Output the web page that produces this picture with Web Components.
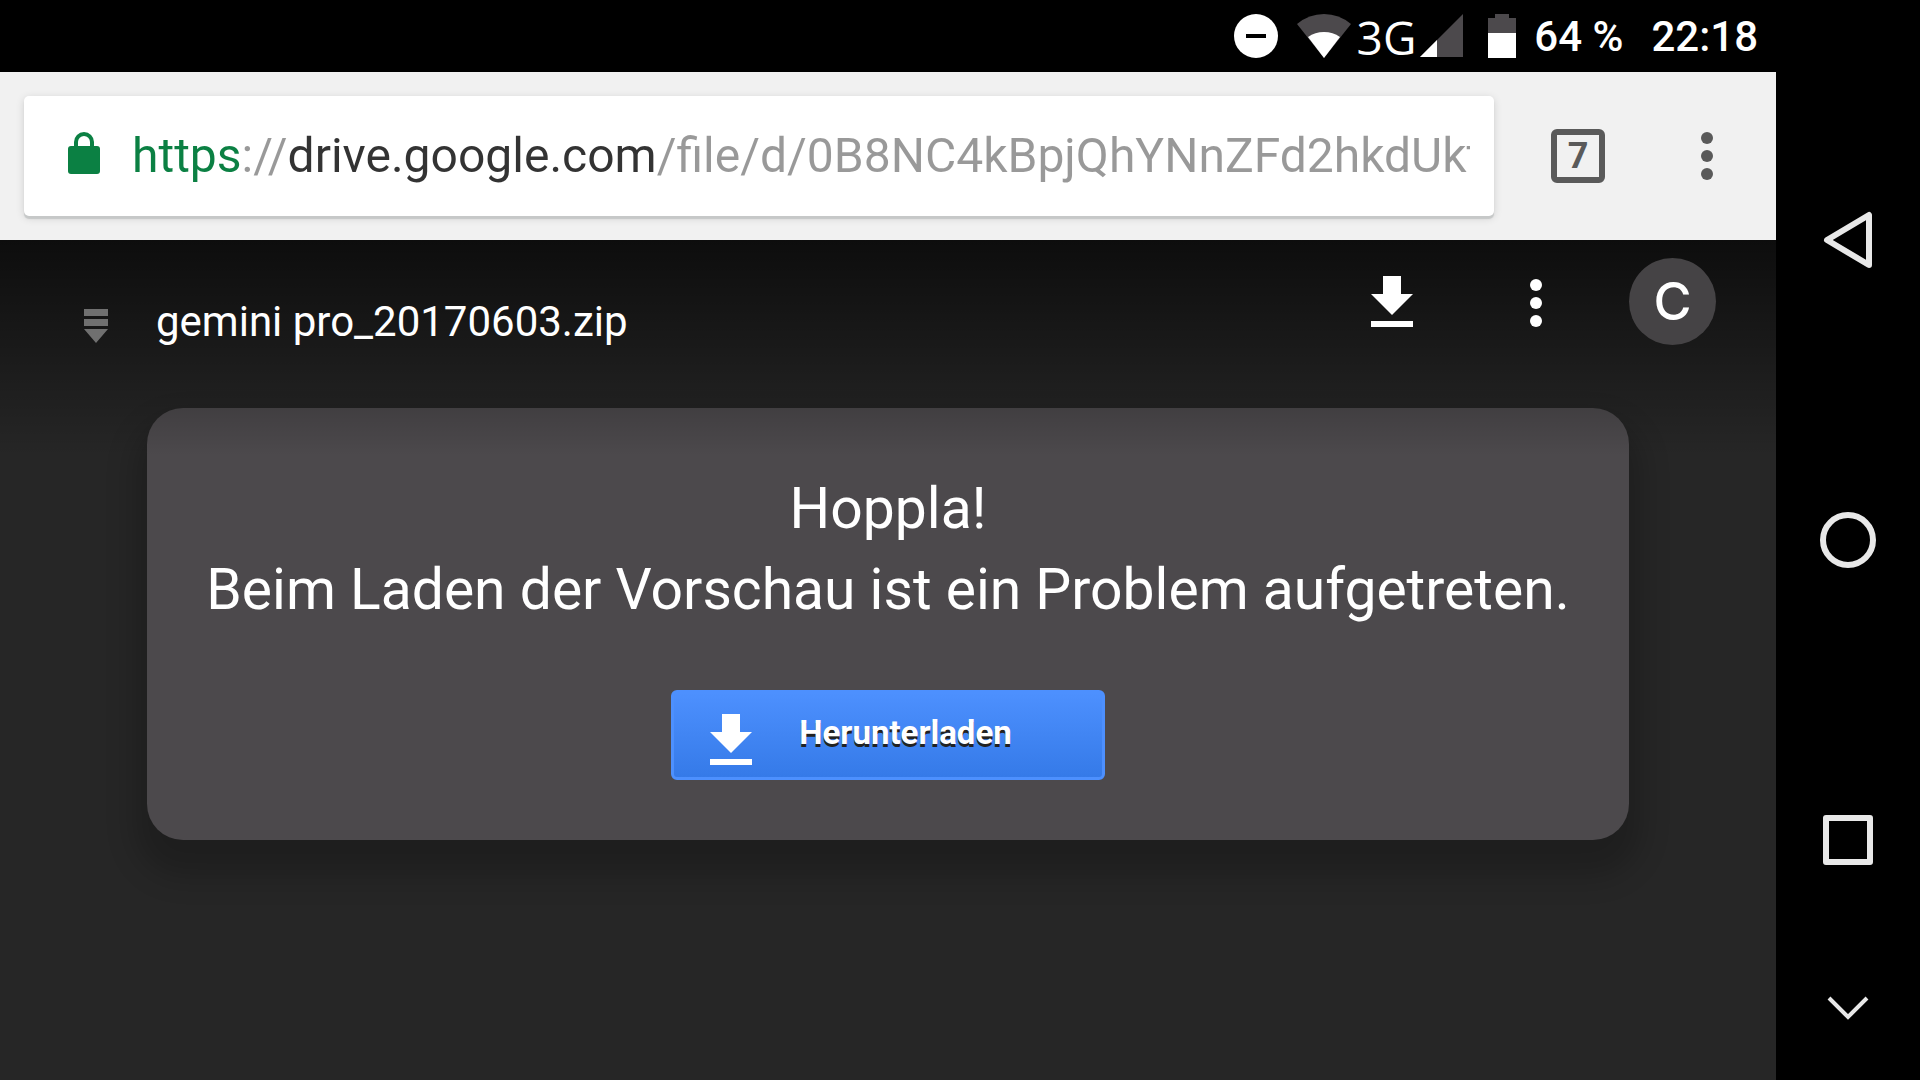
<!DOCTYPE html>
<html lang="de">
<head>
<meta charset="utf-8">
<title>gemini pro_20170603.zip</title>
<style>
  html, body {
    height: 100%;
    margin: 0;
  }
  body {
    background: #000;
    color: #fff;
    font-family: Roboto, "Open Sans", sans-serif;
  }
</style>
</head>
<body>
<phone-screen>
  <status-bar slot="status" network="3G" battery="64 %" time="22:18"></status-bar>
  <browser-toolbar slot="toolbar" tabs="7"
    url="https://drive.google.com/file/d/0B8NC4kBpjQhYNnZFd2hkdUktTUk"></browser-toolbar>
  <drive-viewer filename="gemini pro_20170603.zip" account="C">
    <preview-error>
      Hoppla!<br>Beim Laden der Vorschau ist ein Problem aufgetreten.
      <download-button slot="action">Herunterladen</download-button>
    </preview-error>
  </drive-viewer>
  <navigation-bar slot="navigation"></navigation-bar>
</phone-screen>

<script>
const downloadIcon = `
  <svg width="72" height="72" viewBox="0 0 24 24" fill="#fff" aria-hidden="true">
    <path d="M19 9h-4V3H9v6H5l7 7 7-7zM5 18v2h14v-2H5z"/>
  </svg>`;

const moreIcon = `
  <svg width="72" height="72" viewBox="0 0 24 24" fill="currentColor" aria-hidden="true">
    <circle cx="12" cy="6" r="2"/><circle cx="12" cy="12" r="2"/><circle cx="12" cy="18" r="2"/>
  </svg>`;

const buttonReset = `
  button {
    display: flex;
    align-items: center;
    justify-content: center;
    margin: 0;
    padding: 0;
    border: 0;
    background: none;
    color: inherit;
    font: inherit;
    cursor: pointer;
  }
  svg {
    display: block;
    flex: none;
  }`;

class PhoneScreen extends HTMLElement {

  constructor() {
    super();
    this.attachShadow({mode: 'open'});
  }

  connectedCallback() {
    this.shadowRoot.innerHTML = `
      <style>
        :host {
          display: grid;
          grid-template-columns: 1fr 144px;
          height: 100vh;
        }
        .window {
          display: flex;
          flex-direction: column;
          min-width: 0;
        }
      </style>
      <div class="window">
        <slot name="status"></slot>
        <slot name="toolbar"></slot>
        <slot></slot>
      </div>
      <slot name="navigation"></slot>
    `;
  }
}

class StatusBar extends HTMLElement {

  constructor() {
    super();
    this.attachShadow({mode: 'open'});
  }

  connectedCallback() {
    this.shadowRoot.innerHTML = `
      <style>
        :host {
          display: flex;
          align-items: center;
          justify-content: flex-end;
          height: 72px;
          padding-right: 18px;
          font-size: 42px;
          font-weight: 500;
          line-height: 72px;
        }
        svg {
          flex: none;
        }
        span {
          padding-top: 2px;
        }
        .wifi {
          margin-left: 19px;
        }
        .network {
          margin-left: 6px;
          font: 46px/72px "Open Sans", sans-serif;
        }
        .signal {
          margin-left: 4px;
        }
        .battery {
          margin: 0 18px 0 24px;
        }
        .time {
          margin-left: 28px;
        }
      </style>
      <svg width="44" height="44" viewBox="0 0 44 44" role="img" aria-label="Nicht stören">
        <circle cx="22" cy="22" r="22" fill="#fff"/>
        <path d="M12 20h20v4H12z"/>
      </svg>
      <svg class="wifi" width="54" height="44" viewBox="0 0 54 44" role="img" aria-label="WLAN">
        <path d="M27 44 0 10Q12 0 27 0T54 10z" fill="#4c494c"/>
        <path d="M27 44 11 23Q18 18 27 18T43 23z" fill="#fff"/>
      </svg>
      <span class="network">${this.getAttribute('network')}</span>
      <svg class="signal" width="44" height="44" viewBox="0 0 44 44" role="img" aria-label="Mobilfunk">
        <path d="M0 43 43 0v43z" fill="#4c494c"/>
        <path d="M0 43 17 26v17z" fill="#fff"/>
      </svg>
      <svg class="battery" width="28" height="44" viewBox="0 0 28 44" role="img" aria-label="Akku">
        <path d="M0 4h7V0h14v4h7v15H0z" fill="#4c494c"/>
        <path d="M0 19h28v25H0z" fill="#fff"/>
      </svg>
      <span>${this.getAttribute('battery')}</span>
      <span class="time">${this.getAttribute('time')}</span>
    `;
  }
}

class BrowserToolbar extends HTMLElement {

  constructor() {
    super();
    this.attachShadow({mode: 'open'});
  }

  connectedCallback() {
    this.shadowRoot.innerHTML = `
      <style>
        ${buttonReset}
        :host {
          display: flex;
          align-items: center;
          height: 168px;
          padding: 0 12px 0 24px;
          box-sizing: border-box;
          background: #f1f1f1;
          color: #5a5a5a;
        }
        .omnibox {
          display: flex;
          align-items: center;
          flex: 1;
          min-width: 0;
          height: 120px;
          margin-right: 12px;
          padding: 0 24px 0 44px;
          box-sizing: border-box;
          border-radius: 5px;
          background: #fff;
          box-shadow: 0 3px 1px #c6c8c8, 0 2px 8px rgba(0, 0, 0, .14);
        }
        /* scheme, separator, host and path each get their own colour stop */
        input {
          flex: 1;
          min-width: 0;
          height: 72px;
          margin-left: 32px;
          padding: 0;
          border: 0;
          outline: 0;
          background: linear-gradient(90deg, #0b8043 110px, #999 110px 156px, #333 156px 523px, #999 523px);
          -webkit-background-clip: text;
          background-clip: text;
          color: transparent;
          font: 48px/72px Roboto, "Open Sans", sans-serif;
        }
        .tabs {
          width: 144px;
          height: 144px;
        }
        .tabs span {
          width: 42px;
          border: 6px solid #5a5a5a;
          border-radius: 6px;
          font-size: 36px;
          font-weight: 700;
          line-height: 42px;
          text-align: center;
        }
        .menu {
          width: 114px;
          height: 144px;
        }
      </style>
      <label class="omnibox">
        <svg width="32" height="48" viewBox="0 0 32 48" role="img" aria-label="Sichere Verbindung">
          <rect y="14" width="32" height="28" rx="3" fill="#0b8043"/>
          <path d="M8 15v-5a8 8 0 0 1 16 0v5" fill="none" stroke="#0b8043" stroke-width="4"/>
        </svg>
        <input type="text" aria-label="Adresse" spellcheck="false" value="${this.getAttribute('url')}">
      </label>
      <button class="tabs" type="button" aria-label="Tabs"><span>${this.getAttribute('tabs')}</span></button>
      <button class="menu" type="button" aria-label="Menü">${moreIcon}</button>
    `;
  }
}

class DriveViewer extends HTMLElement {

  constructor() {
    super();
    this.attachShadow({mode: 'open'});
  }

  connectedCallback() {
    this.shadowRoot.innerHTML = `
      <style>
        ${buttonReset}
        :host {
          display: block;
          flex: 1;
          position: relative;
          background: #262626;
        }
        /* fades the top of the page, card included */
        :host::before {
          content: "";
          position: absolute;
          inset: 0 0 auto;
          height: 216px;
          background: linear-gradient(rgba(0, 0, 0, .66), rgba(0, 0, 0, 0));
          pointer-events: none;
          z-index: 1;
        }
        header {
          display: flex;
          align-items: flex-start;
          position: relative;
          z-index: 2;
          height: 123px;
          padding: 0 60px 0 84px;
        }
        h1 {
          flex: 1;
          margin: 58px 0 0 48px;
          font-size: 42px;
          font-weight: 400;
          line-height: 48px;
        }
        .type {
          margin-top: 69px;
        }
        .download, .more {
          margin-top: 27px;
        }
        .more {
          margin-left: 72px;
          margin-right: 57px;
        }
        .account {
          width: 87px;
          height: 87px;
          margin-top: 18px;
          border-radius: 50%;
          background: #454345;
          font: 500 52px Inter, Roboto, sans-serif;
        }
        main {
          margin: 45px 147px 0;
        }
      </style>
      <header>
        <svg class="type" width="24" height="34" viewBox="0 0 24 34" fill="#707070" role="img" aria-label="Archiv">
          <path d="M0 0h24v7H0zM0 10h24v7H0zM0 20h24L12 34z"/>
        </svg>
        <h1>${this.getAttribute('filename')}</h1>
        <button class="download" type="button" aria-label="Herunterladen">${downloadIcon}</button>
        <button class="more" type="button" aria-label="Weitere Aktionen">${moreIcon}</button>
        <button class="account" type="button">${this.getAttribute('account')}</button>
      </header>
      <main><slot></slot></main>
    `;
  }
}

class PreviewError extends HTMLElement {

  constructor() {
    super();
    this.attachShadow({mode: 'open'});
  }

  connectedCallback() {
    this.shadowRoot.innerHTML = `
      <style>
        :host {
          display: flex;
          flex-direction: column;
          align-items: center;
          gap: 60px;
          padding: 60px 0;
          border-radius: 36px;
          background: #4c494c;
          box-shadow: 0 24px 30px 12px rgba(0, 0, 0, .2);
        }
        p {
          margin: 0;
          font-size: 57px;
          line-height: 81px;
          text-align: center;
        }
      </style>
      <p><slot></slot></p>
      <slot name="action"></slot>
    `;
  }
}

class DownloadButton extends HTMLElement {

  constructor() {
    super();
    this.attachShadow({mode: 'open'});
  }

  connectedCallback() {
    this.shadowRoot.innerHTML = `
      <style>
        ${buttonReset}
        :host {
          display: block;
        }
        button {
          align-items: flex-start;
          gap: 32px;
          height: 90px;
          padding: 12px 90px 0 21px;
          border: 3px solid #4d90fe;
          border-radius: 6px;
          background: linear-gradient(#4d90fe, #357ae8);
          font-size: 33px;
          font-weight: 700;
          line-height: 56px;
          text-shadow: 0 3px #222;
        }
      </style>
      <button type="button">${downloadIcon}<slot></slot></button>
    `;
  }
}

class NavigationBar extends HTMLElement {

  constructor() {
    super();
    this.attachShadow({mode: 'open'});
  }

  connectedCallback() {
    this.shadowRoot.innerHTML = `
      <style>
        ${buttonReset}
        :host {
          display: flex;
          flex-direction: column;
          background: #000;
        }
        nav {
          display: flex;
          flex: 1;
          flex-direction: column;
          justify-content: space-between;
          padding: 168px 0 24px;
        }
        button {
          width: 144px;
          height: 144px;
        }
        svg {
          fill: none;
          stroke: #e8e8e8;
          stroke-width: 6;
          stroke-linejoin: round;
          stroke-linecap: round;
        }
        .hide svg {
          stroke-width: 4;
          stroke-linecap: butt;
          stroke-linejoin: miter;
        }
      </style>
      <nav>
        <button type="button" aria-label="Zurück">
          <svg width="60" height="60" viewBox="0 0 60 60"><path d="M51 5v50L9 30z"/></svg>
        </button>
        <button type="button" aria-label="Startbildschirm">
          <svg width="60" height="60" viewBox="0 0 60 60"><circle cx="30" cy="30" r="25"/></svg>
        </button>
        <button type="button" aria-label="Übersicht">
          <svg width="60" height="60" viewBox="0 0 60 60"><path d="M8 8h44v44H8z"/></svg>
        </button>
      </nav>
      <button class="hide" type="button" aria-label="Leiste ausblenden">
        <svg width="60" height="60" viewBox="0 0 60 60"><path d="M11 20 30 39 49 20"/></svg>
      </button>
    `;
  }
}

customElements.define('phone-screen', PhoneScreen);
customElements.define('status-bar', StatusBar);
customElements.define('browser-toolbar', BrowserToolbar);
customElements.define('drive-viewer', DriveViewer);
customElements.define('preview-error', PreviewError);
customElements.define('download-button', DownloadButton);
customElements.define('navigation-bar', NavigationBar);
</script>
</body>
</html>
